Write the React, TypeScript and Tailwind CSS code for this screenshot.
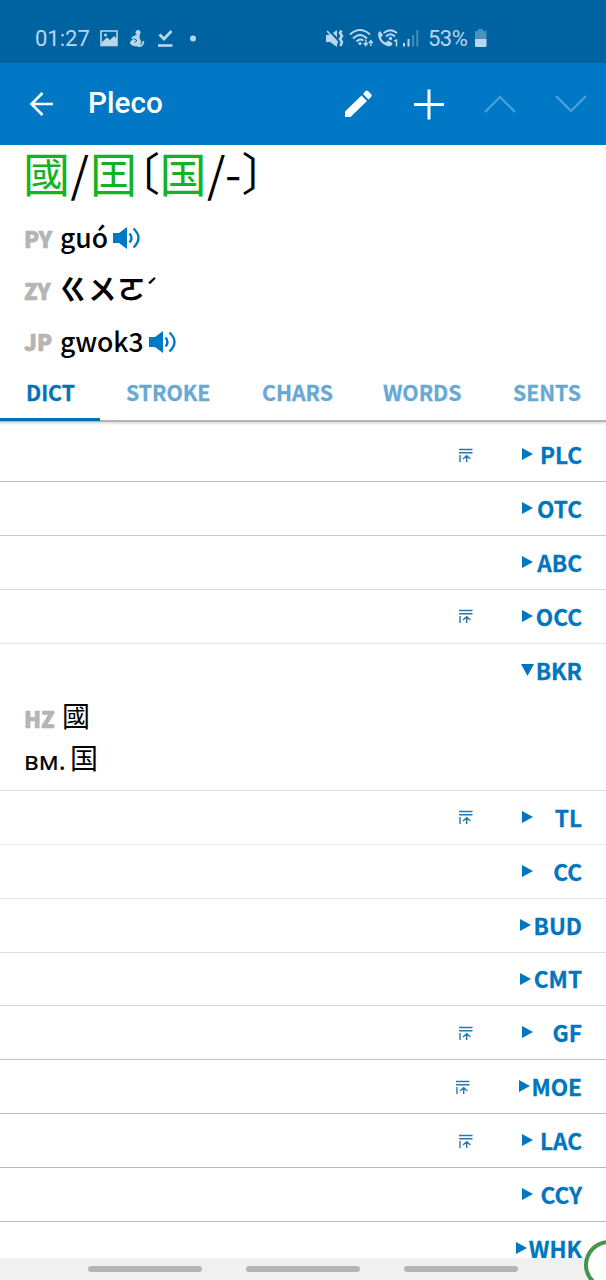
import React from "react";

type Entry = { name: string; arrow: string; pin?: string; border: string };

const before: Entry[] = [
  { name: "PLC", arrow: "left-[522px]", pin: "left-[458px]", border: "border-[#b9b9b9]" },
  { name: "OTC", arrow: "left-[522px]", border: "border-[#c8c8c8]" },
  { name: "ABC", arrow: "left-[522px]", border: "border-[#dadada]" },
  { name: "OCC", arrow: "left-[522px]", pin: "left-[458px]", border: "border-[#e4e4e4]" },
];

const after: Entry[] = [
  { name: "TL", arrow: "left-[522px]", pin: "left-[458px]", border: "border-[#e8e8e8]" },
  { name: "CC", arrow: "left-[522px]", border: "border-[#e4e4e4]" },
  { name: "BUD", arrow: "left-[520px]", border: "border-[#dedede]" },
  { name: "CMT", arrow: "left-[520px]", border: "border-[#d4d4d4]" },
  { name: "GF", arrow: "left-[522px]", pin: "left-[458px]", border: "border-[#c4c4c4]" },
  { name: "MOE", arrow: "left-[519px]", pin: "left-[455px]", border: "border-[#b9b9b9]" },
  { name: "LAC", arrow: "left-[522px]", pin: "left-[458px]", border: "border-[#b9b9b9]" },
  { name: "CCY", arrow: "left-[522px]", border: "border-[#b9b9b9]" },
];

function PinTop() {
  return (
    <svg width="15" height="15" viewBox="0 0 15 15" fill="none" stroke="#2878b0" strokeWidth="1.4">
      <path d="M1 1.5H14.500M1 4.700H14.500M2 7V14M8.700 14V8M5 11L8.700 7.600L12.400 11" />
    </svg>
  );
}

function Row({ entry }: { entry: Entry }) {
  return (
    <div className={`relative flex h-[53.9px] shrink-0 items-center justify-end border-b pr-6 ${entry.border}`}>
      {entry.pin && (
        <span className={`absolute top-[19.500px] ${entry.pin}`}>
          <PinTop />
        </span>
      )}
      <svg className={`absolute top-[20px] ${entry.arrow}`} width="11" height="12" viewBox="0 0 11 12">
        <path d="M0 0L11 6L0 12Z" fill="#0076c0" />
      </svg>
      <span className="text-[22.600px] font-bold leading-[53px] text-[#0076bf] [-webkit-text-stroke:0.3px_#0076bf]">{entry.name}</span>
    </div>
  );
}

function Speaker() {
  return (
    <svg width="28" height="24" viewBox="0 0 28 24" fill="none" stroke="#0078c4" strokeWidth="2.4">
      <path d="M0 7H6L14 1V23L6 17H0Z" fill="#0078c4" stroke="none" />
      <path d="M16.500 7.500Q20.500 12 16.500 16.500M20.500 2.500Q30.500 12 20.500 21.500" />
    </svg>
  );
}

function StatusBar() {
  return (
    <div className="flex h-[63px] items-start bg-[#0063a1] font-['Roboto',sans-serif] text-[#b9d7eb]">
      <span className="ml-[35px] mt-[27px] w-[64px] text-[22px] leading-6">01:27</span>
      <svg className="mt-[27px]" width="100" height="24" viewBox="99 27 100 24" fill="none" stroke="currentColor">
        <path d="M101 31H117V45.500H101Z" strokeWidth="1.6" />
        <path d="M102 42L107 37.5L110 40L114 36L117 39V45H102Z" fill="currentColor" stroke="none" />
        <circle cx="105.5" cy="35" r="1.5" fill="currentColor" stroke="none" />
        <circle cx="138" cy="32.500" r="2.500" fill="currentColor" stroke="none" />
        <path d="M134.500 35.500L140 34.500L139.500 38L141.500 42L139 46.500Q132.500 47 130 43.500Q129.500 41.500 133 39.500L131 38Z" fill="currentColor" stroke="none" />
        <path d="M133.500 38.500L137 40.500L134.500 42.500" stroke="#0063a1" strokeWidth="1" />
        <path d="M138 46Q143 46.500 143.500 41" strokeWidth="1.8" />
        <path d="M159.500 34.500L164 39L171.500 31" strokeWidth="2.8" />
        <path d="M158 45.500H172.500" strokeWidth="2.6" />
        <circle cx="193" cy="38.500" r="3" fill="currentColor" stroke="none" />
      </svg>
      <svg className="ml-[125px] mt-[25px]" width="96" height="26" viewBox="324 25 96 26" fill="none" stroke="currentColor">
        <path d="M326 35H330L337 30V47L330 42H326Z" fill="currentColor" stroke="none" />
        <path d="M328 29L338 40" stroke="#0063a1" strokeWidth="2" />
        <path d="M327 31L338 43" strokeWidth="1.600" />
        <path d="M341.500 30.500L340 33L342 36L340 39L342 42L340.500 46" strokeWidth="2.500" />
        <path d="M350 34.500Q360 25.500 370 34.500M353 38.500Q360 31.500 367 38.500M356.500 41.500Q360 38 363.500 40.500" strokeWidth="2" />
        <circle cx="360" cy="43.500" r="1.600" fill="currentColor" stroke="none" />
        <path d="M365.800 39.500V45M363.800 43L365.800 45.500L367.800 43M370.800 46V40.500M368.800 43L370.800 40.500L372.800 43" strokeWidth="1.400" />
        <path d="M380 31L383 35L381 37.500Q382 41.500 386 42.500L388 40.500L392.500 43Q392 47 387 46Q379 43 378 35Q378 32 380 31Z" fill="currentColor" stroke="none" />
        <path d="M383.500 33Q390.500 27.500 397 33M386 36.500Q390.500 32 395 36.500" strokeWidth="1.800" />
        <circle cx="390.500" cy="38.500" r="1.700" fill="currentColor" stroke="none" />
        <path d="M394 41L396.500 40V46.500" strokeWidth="1.500" />
        <path d="M404 46.500V43M408.500 46.500V39" strokeWidth="2" />
        <path d="M413 46.500V35M417.300 46.500V30" strokeWidth="1.800" opacity=".4" />
      </svg>
      <span className="ml-[8px] mt-[27px] w-[46px] text-[22px] leading-6 tracking-[-0.5px]">53%</span>
      <svg className="mt-[27px]" width="14" height="22" viewBox="0 0 14 22" fill="currentColor">
        <path d="M4 2H9V4H12.500V12H1V4H4Z" opacity=".4" />
        <path d="M1 12H12.500V18.500Q12.500 20 11 20H2.500Q1 20 1 18.500Z" />
      </svg>
    </div>
  );
}

function Toolbar() {
  return (
    <div className="flex h-[82px] items-center bg-[#0078c6] text-white">
      <svg className="ml-[29px]" width="26" height="26" viewBox="0 0 26 26" fill="none" stroke="currentColor" strokeWidth="2.6">
        <path d="M24 13H2M13.500 2L2.500 13L13.500 24" />
      </svg>
      <span className="ml-[33px] w-[252px] pb-[3px] font-['Roboto',sans-serif] text-[29.700px] font-medium leading-10">Pleco</span>
      <svg width="36" height="36" viewBox="340 86 36 36" fill="currentColor">
        <path d="M345 111.500L361.500 95.500L367 101L350.500 117H345ZM363 94L365.500 91Q366.500 90 368 91L371.500 94.500Q372 96 371 97L368.500 99.500Z" />
      </svg>
      <svg className="ml-[37px]" width="32" height="32" viewBox="0 0 32 32" fill="none" stroke="currentColor" strokeWidth="3">
        <path d="M1 16.500H31M16 1.500V31.500" />
      </svg>
      <svg className="ml-[38px]" width="34" height="20" viewBox="0 0 34 20" fill="none" stroke="#4ba1dc" strokeWidth="2.2">
        <path d="M2 18L17 3L32 18" />
      </svg>
      <svg className="ml-[37px]" width="34" height="20" viewBox="0 0 34 20" fill="none" stroke="#4ba1dc" strokeWidth="2.2">
        <path d="M2 2L17 17L32 2" />
      </svg>
    </div>
  );
}

export default function App() {
  return (
    <div className="relative flex h-[1280px] w-[606px] flex-col overflow-hidden bg-white font-['Noto_Sans_CJK_TC','Noto_Sans_CJK_SC',sans-serif] text-black">
      <StatusBar />
      <Toolbar />
      <div className="flex h-[67px] pl-[23px] text-[47px] leading-[54px]" lang="zh-Hant">
        <span className="w-[47.500px] text-[#12b324]">國</span>
        <span className="w-[19.500px]">/</span>
        <span className="w-[47.500px] text-[#12b324]">囯</span>
        <span className="w-[22px] text-[45px] [font-feature-settings:'halt']">〔</span>
        <span className="w-[47.500px] font-['Noto_Sans_CJK_SC',sans-serif] text-[#12b324]">国</span>
        <span className="w-[18px]">/</span>
        <span className="w-[16.500px]">-</span>
        <span className="text-[45px] [font-feature-settings:'halt']">〕</span>
      </div>
      <div className="flex h-[52px] items-center pl-6">
        <span className="w-[36px] pb-[1px] text-[22px] font-black leading-[50px] text-[#b5b5b5] [-webkit-text-stroke:0.7px_#b5b5b5]">PY</span>
        <span className="w-[53px] pb-[2px] text-[26.500px] font-medium leading-[50px]">guó</span>
        <Speaker />
      </div>
      <div className="flex h-[52px] items-center pl-6">
        <span className="w-[35px] pt-[1px] text-[22px] font-black leading-[51px] text-[#b5b5b5] [-webkit-text-stroke:0.7px_#b5b5b5]">ZY</span>
        <span className="pb-[4px] text-[28px] font-bold leading-[48px] tracking-[1.200px]">ㄍㄨㄛ</span>
        <span className="pb-[9px] text-[18px] font-bold leading-[43px]">ˊ</span>
      </div>
      <div className="flex h-[52px] items-center pl-6">
        <span className="w-[36px] pb-[2px] text-[22px] font-black leading-[50px] text-[#b5b5b5] [-webkit-text-stroke:0.7px_#b5b5b5]">JP</span>
        <span className="w-[89px] pb-[3px] text-[26.500px] font-medium leading-[49px]">gwok3</span>
        <Speaker />
      </div>
      <div className="relative flex h-[54px] border-b-2 border-[#b4b4b4] text-[21.200px] font-bold leading-[48px] text-[#66a9d5]">
        <span className="-mb-px w-[100px] border-b-[3px] border-[#0073b8] pl-[26px] text-[#0073b8] [-webkit-text-stroke:0.3px_#0073b8]">DICT</span>
        <span className="w-[136px] pl-[26px] [-webkit-text-stroke:0.3px_#66a9d5]">STROKE</span>
        <span className="w-[121px] pl-[26px] [-webkit-text-stroke:0.3px_#66a9d5]">CHARS</span>
        <span className="w-[130px] pl-[26px] [-webkit-text-stroke:0.3px_#66a9d5]">WORDS</span>
        <span className="pl-[26px] [-webkit-text-stroke:0.3px_#66a9d5]">SENTS</span>
      </div>
      <div className="flex h-[858px] shrink-0 flex-col">
        <div className="h-[6.300px] shrink-0 bg-linear-to-b from-[#dddddd] to-white to-60%" />
        {before.map((e) => (
          <Row key={e.name} entry={e} />
        ))}
        <div className="h-[147px] shrink-0 border-b border-[#dddddd]">
          <div className="relative flex h-[53px] justify-end pr-6 text-[22.600px] font-bold leading-[53px] text-[#0076bf] [-webkit-text-stroke:0.3px_#0076bf]">
            <svg className="absolute left-[521px] top-[20px]" width="13" height="12" viewBox="0 0 13 12">
              <path d="M0 0H13L6.500 12Z" fill="#0076c0" />
            </svg>
            BKR
          </div>
          <div className="flex h-[42px] pl-6">
            <span className="w-[38px] text-[22px] font-black leading-[42px] text-[#b5b5b5] [-webkit-text-stroke:0.7px_#b5b5b5]">HZ</span>
            <span className="text-[28px] leading-[37px]">國</span>
          </div>
          <div className="flex h-[42px] pl-6">
            <span className="w-[46px] font-['Noto_Sans',sans-serif] text-[26px] leading-[43px] [-webkit-text-stroke:0.2px_black]">вм.</span>
            <span className="font-['Noto_Sans_CJK_SC',sans-serif] text-[28px] leading-[37px]">国</span>
          </div>
        </div>
        {after.map((e) => (
          <Row key={e.name} entry={e} />
        ))}
        <div className="relative flex h-[35.900px] shrink-0 justify-end pr-6 text-[22.600px] font-bold leading-[53px] text-[#0076bf] [-webkit-text-stroke:0.3px_#0076bf]">
          <svg className="absolute left-[516px] top-[20px]" width="11" height="12" viewBox="0 0 11 12">
            <path d="M0 0L11 6L0 12Z" fill="#0076c0" />
          </svg>
          WHK
        </div>
        <div className="relative flex h-[22px] shrink-0 items-center justify-center gap-[44px] bg-[#f0f0f0]">
          <span className="h-[5.500px] w-[114px] rounded-full bg-[#b5b5b5]" />
          <span className="h-[5.500px] w-[114px] rounded-full bg-[#b5b5b5]" />
          <span className="h-[5.500px] w-[114px] rounded-full bg-[#b5b5b5]" />
        </div>
      </div>
      <div className="absolute left-[584px] top-[1240px] h-[50px] w-[50px] rounded-full border-[4px] border-[#43964a] bg-white" />
    </div>
  );
}
